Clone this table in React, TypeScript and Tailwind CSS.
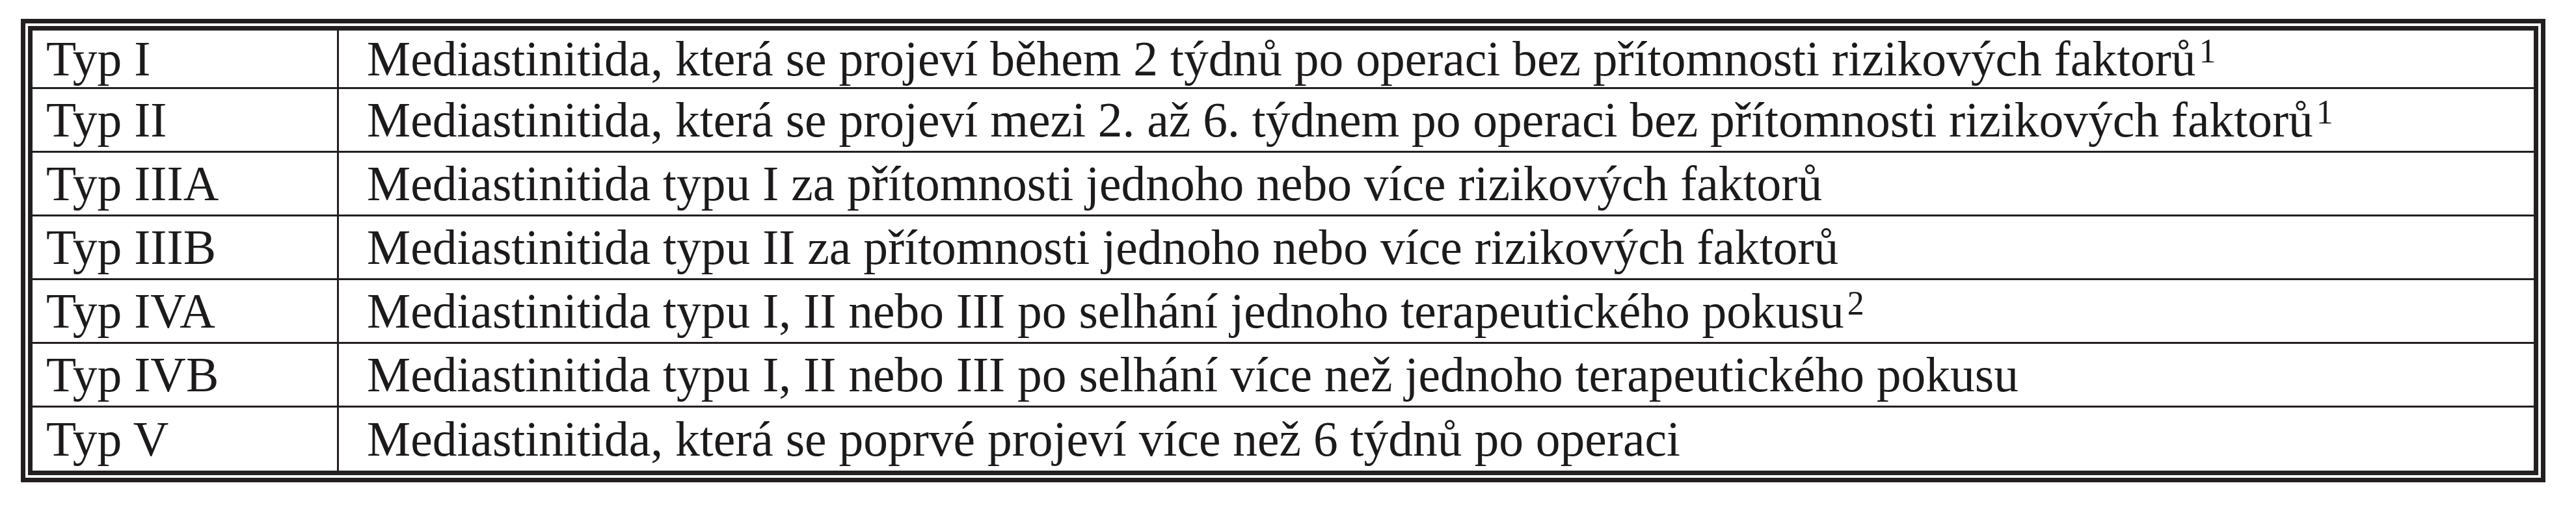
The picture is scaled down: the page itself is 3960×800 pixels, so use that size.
const rows: { type: string; desc: string; note?: string }[] = [
  {
    type: "Typ I",
    desc: "Mediastinitida, která se projeví během 2 týdnů po operaci bez přítomnosti rizikových faktorů",
    note: "1",
  },
  {
    type: "Typ II",
    desc: "Mediastinitida, která se projeví mezi 2. až 6. týdnem po operaci bez přítomnosti rizikových faktorů",
    note: "1",
  },
  {
    type: "Typ IIIA",
    desc: "Mediastinitida typu I za přítomnosti jednoho nebo více rizikových faktorů",
  },
  {
    type: "Typ IIIB",
    desc: "Mediastinitida typu II za přítomnosti jednoho nebo více rizikových faktorů",
  },
  {
    type: "Typ IVA",
    desc: "Mediastinitida typu I, II nebo III po selhání jednoho terapeutického pokusu",
    note: "2",
  },
  {
    type: "Typ IVB",
    desc: "Mediastinitida typu I, II nebo III po selhání více než jednoho terapeutického pokusu",
  },
  {
    type: "Typ V",
    desc: "Mediastinitida, která se poprvé projeví více než 6 týdnů po operaci",
  },
];

export default function App() {
  return (
    <div className="min-h-[800px] bg-white pl-[32px] pt-[29px] font-['Liberation_Serif','Times_New_Roman',serif] text-[#1c1a1b]">
      {/* double frame */}
      <div className="w-[3881px] border-[7px] border-[#231f20] p-[4px]">
        <div className="border-[7px] border-[#231f20]">
          {rows.map((row, i) => (
            <div
              key={row.type}
              className={`flex ${i === 0 ? "h-[87px]" : "h-[98px] border-t-[3px] border-[#231f20]"} ${
                i === rows.length - 1 ? "h-[100px]" : ""
              }`}
            >
              <div className="flex w-[471px] shrink-0 items-center border-r-[3px] border-[#231f20] pl-[21px] text-[75.5px] leading-none">
                {row.type}
              </div>
              <div className="flex flex-1 items-center pl-[43px] text-[75.5px] leading-none">
                <span>
                  {row.desc}
                  {row.note && (
                    <sup className="relative top-[-20px] ml-[5px] align-baseline text-[52px] leading-none">
                      {row.note}
                    </sup>
                  )}
                </span>
              </div>
            </div>
          ))}
        </div>
      </div>
    </div>
  );
}
